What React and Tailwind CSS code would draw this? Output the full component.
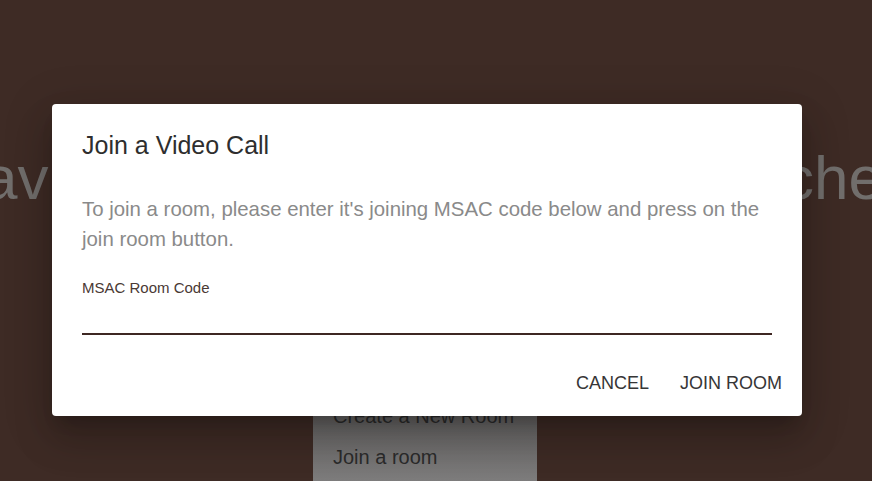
import React from "react";

export default function App() {
  return (
    <div
      className="relative w-[872px] h-[481px] overflow-hidden bg-[#3e2b25]"
      style={{ fontFamily: '"Liberation Sans", Arial, sans-serif' }}
    >
      {/* background page (behind overlay) */}
      <div className="flex flex-col items-center w-[850px] h-full">
        <div className="flex w-[872px] justify-between pt-[138px] text-[62px] leading-[80px] text-[#716e6c] whitespace-nowrap">
          <span className="-ml-[6px]">av</span>
          <span className="-mr-[22px]">che</span>
        </div>
        <div className="mt-[164px] w-[224px] flex-1 bg-gradient-to-b from-[#5a5756] to-[#7d7c7c] flex flex-col pl-[20px]">
          <div className="mt-[19px] text-[20px] text-[#2b2b2b] leading-[30px]">Create a New Room</div>
          <div className="mt-[11px] text-[20px] text-[#2b2b2b] leading-[30px]">Join a room</div>
        </div>
      </div>

      {/* dialog */}
      <div className="absolute inset-0 flex justify-start items-start pt-[104px] pl-[52px]">
        <div className="w-[750px] h-[312px] bg-white rounded-[4px] shadow-[0_11px_15px_-7px_rgba(0,0,0,0.2),0_24px_38px_3px_rgba(0,0,0,0.14),0_9px_46px_8px_rgba(0,0,0,0.12)] flex flex-col">
          <div className="px-[30px] pt-[26px] text-[25px] leading-[30px] text-[#2e2e2e]">
            Join a Video Call
          </div>
          <div className="px-[30px] mt-[34px] text-[20.4px] leading-[30px] text-[#8a8a8a]">
            To join a room, please enter it's joining MSAC code below and press on the join room button.
          </div>
          <div className="mx-[30px] mt-[25px] flex flex-col">
            <div className="text-[15px] leading-[18px] text-[#4a3934]">MSAC Room Code</div>
            <div className="h-[38px] border-b-2 border-[#3e2723]"></div>
          </div>
          <div className="flex justify-end items-center gap-[31px] pr-[20px] mt-[38px] text-[18px] leading-[20px] text-[#363636]">
            <span>CANCEL</span>
            <span>JOIN ROOM</span>
          </div>
        </div>
      </div>
    </div>
  );
}
